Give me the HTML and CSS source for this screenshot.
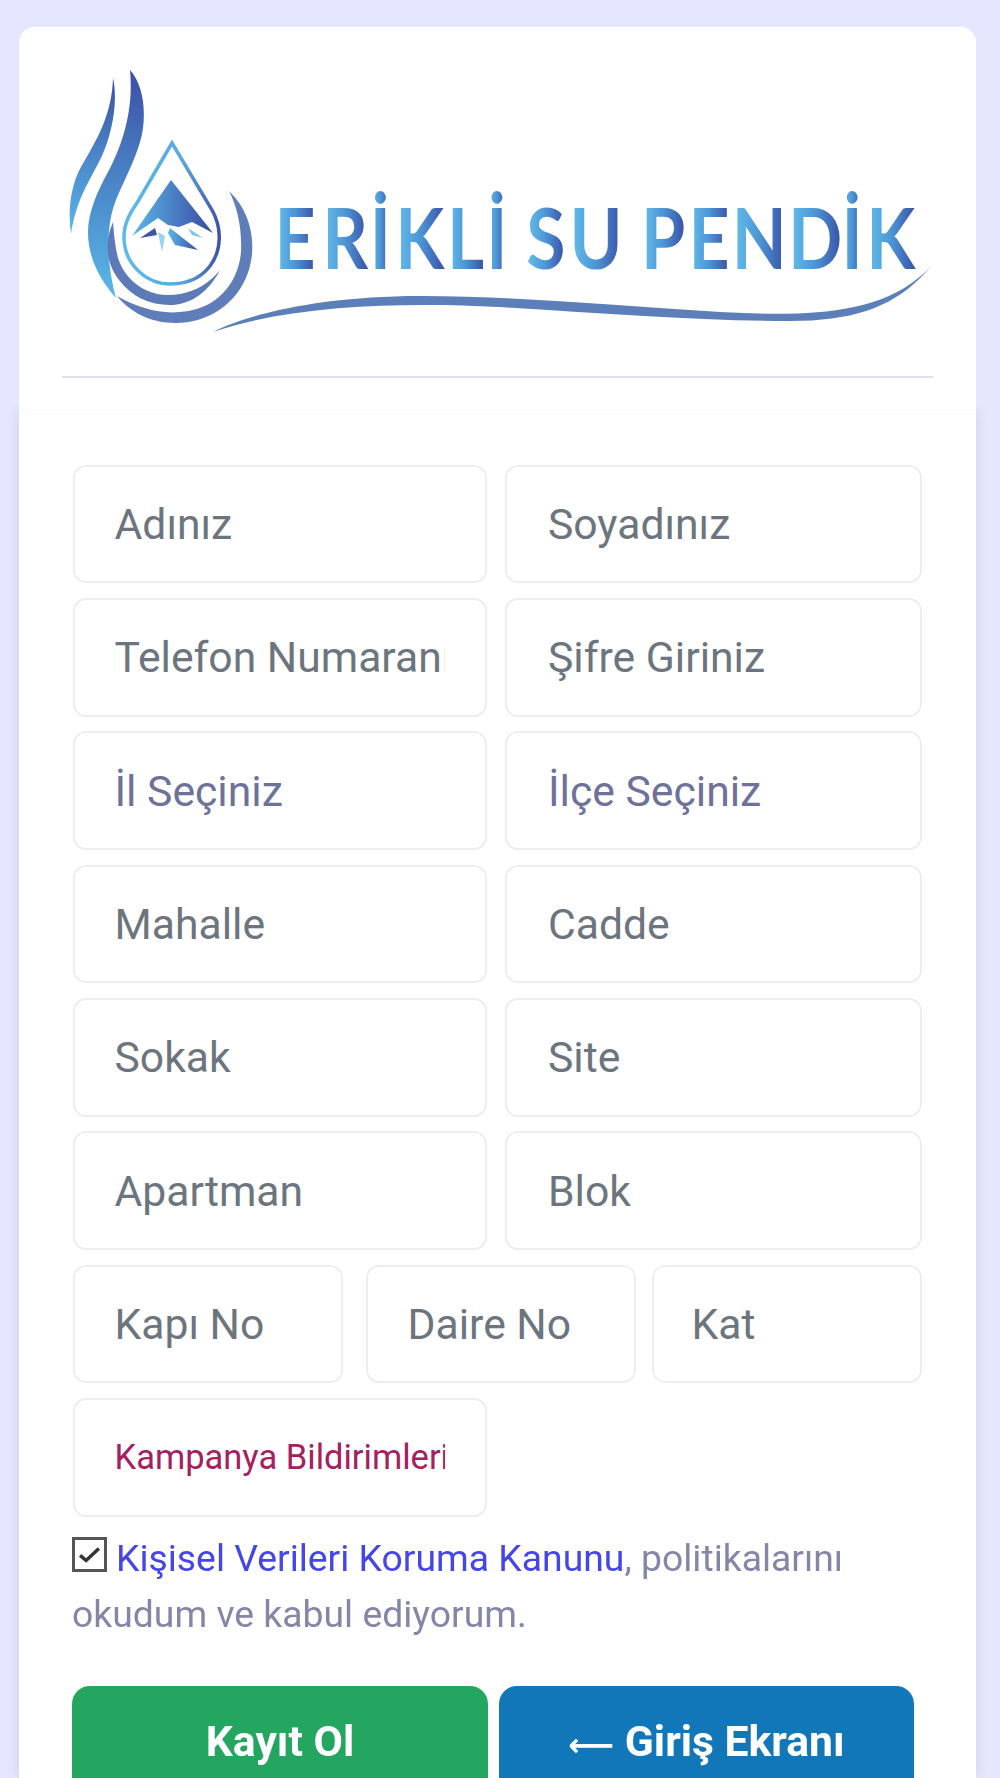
FILE: index.html
```html
<!DOCTYPE html>
<html lang="tr">
<head>
<meta charset="utf-8">
<title>Kayıt Ol</title>
<link rel="stylesheet" href="styles.css">
</head>
<body>
<main class="card">
  <header class="card-head">
    <svg class="logo" viewBox="60 60 880 280" role="img" aria-label="Erikli Su Pendik">
      <defs>
        <linearGradient id="fl" x1="0" y1="1" x2="0" y2="0"><stop offset="0" stop-color="#5ab8e8"/><stop offset=".5" stop-color="#4a86c8"/><stop offset="1" stop-color="#3b4fa3"/></linearGradient>
        <linearGradient id="mt" x1="0" y1="0" x2="1" y2="0"><stop offset="0" stop-color="#5ab8e8"/><stop offset="1" stop-color="#3a4aa2"/></linearGradient>
        <linearGradient id="lt" x1="0" y1="0" x2="1" y2="0"><stop offset="0" stop-color="#66c0ec"/><stop offset=".5" stop-color="#4c95d4"/><stop offset="1" stop-color="#3a4ea6"/></linearGradient>
        <linearGradient id="dr" gradientUnits="userSpaceOnUse" x1="122" y1="0" x2="222" y2="0"><stop offset="0" stop-color="#5cbbe9"/><stop offset=".6" stop-color="#5aa8de"/><stop offset="1" stop-color="#3c4ca2"/></linearGradient>
      </defs>
      <path fill="url(#fl)" d="M113 78C118 100 113 132 101 158C90 180 76 200 71 234C67 206 72 180 85 160C99 136 112 112 113 78Z"/>
      <path fill="url(#fl)" d="M130 70C141 82 146 104 143 128C140 152 124 180 116 200C106 224 106 262 116 298C100 280 88 258 88 232C88 212 98 190 108 172C122 146 134 110 130 70Z"/>
      <path fill="#5f7eb9" d="M229 191C247 208 254 232 252 254C248 296 214 323 176 323C150 323 130 312 117 296C138 308 160 314 180 312C214 310 238 286 241 252C242 230 238 208 229 191Z"/>
      <path fill="#5c7ab7" d="M113 222C105 240 105 262 119 280C132 297 150 305 170 305C192 305 210 290 220 270C208 285 190 295 168 295C145 295 125 280 118 258C115 245 114 235 113 222Z"/>
      <path fill="none" stroke="url(#dr)" stroke-width="3.5" d="M172 143L212 210C222 228 222 250 210 266C200 279 186 284 170 284C146 284 124 264 124 237C124 222 131 212 137 203Z"/>
      <path fill="url(#mt)" d="M171 180L213 233L192 222L179 227L168 225L158 218L132 236Z"/>
      <path fill="#3f55a8" d="M140 238L155 228L157 235Z"/>
      <path fill="url(#mt)" d="M170 228L198 250L175 245L168 233Z"/>
      <path fill="#7cc4ea" d="M188 228L203 238L192 235Z"/>
      <path fill="#9ad4f0" d="M158 232L165 236L162 252Z"/>
      <path fill="#5d7fb9" d="M213 332C250 313 325 296 420 296C520 296 620 306 720 312C800 316 885 318 932 265C900 304 860 321 790 321C700 321 600 313 500 307C420 303 300 302 213 332Z"/>
      <g class="logo-text" transform="scale(.85 1)" fill="url(#lt)">
        <text x="323" y="269">E</text><text x="379" y="269">R</text><text x="435" y="269">İ</text><text x="465" y="269">K</text><text x="526" y="269">L</text><text x="572" y="269">İ</text>
        <text x="619" y="269">S</text><text x="670" y="269">U</text>
        <text x="754" y="269">P</text><text x="810" y="269">E</text><text x="861" y="269">N</text><text x="927" y="269">D</text><text x="990" y="269">İ</text><text x="1019" y="269">K</text>
      </g>
    </svg>
    <hr class="rule">
  </header>
  <form class="card-body">
    <div class="row">
      <input class="field half-l" placeholder="Adınız">
      <input class="field half-r" placeholder="Soyadınız">
    </div>
    <div class="row">
      <input class="field half-l" placeholder="Telefon Numaranız">
      <input class="field half-r" placeholder="Şifre Giriniz">
    </div>
    <div class="row">
      <select class="field half-l pick"><option>İl Seçiniz</option></select>
      <select class="field half-r pick"><option>İlçe Seçiniz</option></select>
    </div>
    <div class="row">
      <input class="field half-l" placeholder="Mahalle">
      <input class="field half-r" placeholder="Cadde">
    </div>
    <div class="row">
      <input class="field half-l" placeholder="Sokak">
      <input class="field half-r" placeholder="Site">
    </div>
    <div class="row">
      <input class="field half-l" placeholder="Apartman">
      <input class="field half-r" placeholder="Blok">
    </div>
    <div class="row">
      <input class="field third-a" placeholder="Kapı No">
      <input class="field third-b" placeholder="Daire No">
      <input class="field third-c" placeholder="Kat">
    </div>
    <div class="row row-last">
      <select class="field half-l campaign"><option>Kampanya Bildirimlerini İstiyorum</option></select>
    </div>
    <p class="consent"><span class="check"><svg viewBox="0 0 34 34"><path d="M6 18l7 6L28 10" fill="none" stroke="#333" stroke-width="4"/></svg></span><a class="law" href="#">Kişisel Verileri Koruma Kanunu</a>, politikalarını okudum ve kabul ediyorum.</p>
    <div class="actions">
      <button class="btn btn-green" type="button">Kayıt Ol</button>
      <button class="btn btn-blue" type="button"><span class="arrow">⟵</span> Giriş Ekranı</button>
    </div>
  </form>
</main>
</body>
</html>
```
FILE: styles.css
```css
* { box-sizing: border-box; }
html, body { margin: 0; height: 1778px; overflow: hidden; }
body {
  background: #e5e7ff;
  font-family: Roboto, "Liberation Sans", sans-serif;
  padding: 27px 24px 0 19px;
}
.card {
  background: #fff;
  border-radius: 16px 16px 0 0;
  width: 957px;
  filter: blur(.7px);
}
.card-head {
  position: relative;
  z-index: 1;
  background: #fff;
  height: 383px;
  padding: 33px 0 0 41px;
  border-radius: 16px 16px 0 0;
  border-bottom: 1px solid #fafafc;
}
.logo { display: block; width: 880px; height: 280px; filter: blur(.5px); }
.logo-text { font-family: Lato, sans-serif; font-weight: 700; font-size: 84px; }
.rule { border: 0; height: 2px; background: #dfe0ec; width: 871px; margin: 36px 0 0 2px; }
.card-body {
  background: #fff;
  box-shadow: 0 0 12px rgba(60, 60, 110, .13);
  padding: 54.67px 0 0 54px;
  height: 1368px;
}
.row { display: flex; height: 118.67px; margin-bottom: 14.67px; }
.row-last { margin-bottom: 0; }
.field {
  display: block;
  height: 100%;
  border: 2px solid #eceef3;
  border-radius: 13px;
  background: #fff;
  padding: 0 40.5px 0 39.5px;
  font: 400 42.67px Roboto, sans-serif;
  color: #6c757d;
  outline: 0;
  appearance: none;
}
.field::placeholder { color: #6c757d; opacity: 1; }
.half-l { width: 414px; margin-right: 18px; }
.half-r { width: 417px; padding-left: 41px; }
.third-a { width: 270px; margin-right: 23px; }
.third-b { width: 270px; margin-right: 16px; padding-left: 39.5px; }
.third-c { width: 270px; padding-left: 37.5px; }
.pick { color: #6e7198; }
.campaign { color: #a4205f; font-size: 34.5px; }
.consent {
  margin: 13px 0 0 -1px;
  width: 860px;
  font-size: 37.33px;
  line-height: 56px;
  color: #8486a6;
}
.check {
  display: inline-block;
  width: 35px;
  height: 35px;
  margin-right: 9px;
  border: 3px solid #555;
  background: #fff;
  vertical-align: -1px;
}
.check svg { display: block; width: 100%; height: 100%; }
.law { color: #4646e6; text-decoration: none; }
.actions { display: flex; margin: 44px 0 0 -1px; }
.btn {
  height: 110px;
  border: 0;
  border-radius: 18px;
  color: #fff;
  font: 700 42.67px Roboto, "DejaVu Sans", sans-serif;
}
.arrow { font-size: 32px; }
.btn-green { width: 416px; margin-right: 11px; background: #24a560; }
.btn-blue { width: 415px; background: #1177b9; }
```
